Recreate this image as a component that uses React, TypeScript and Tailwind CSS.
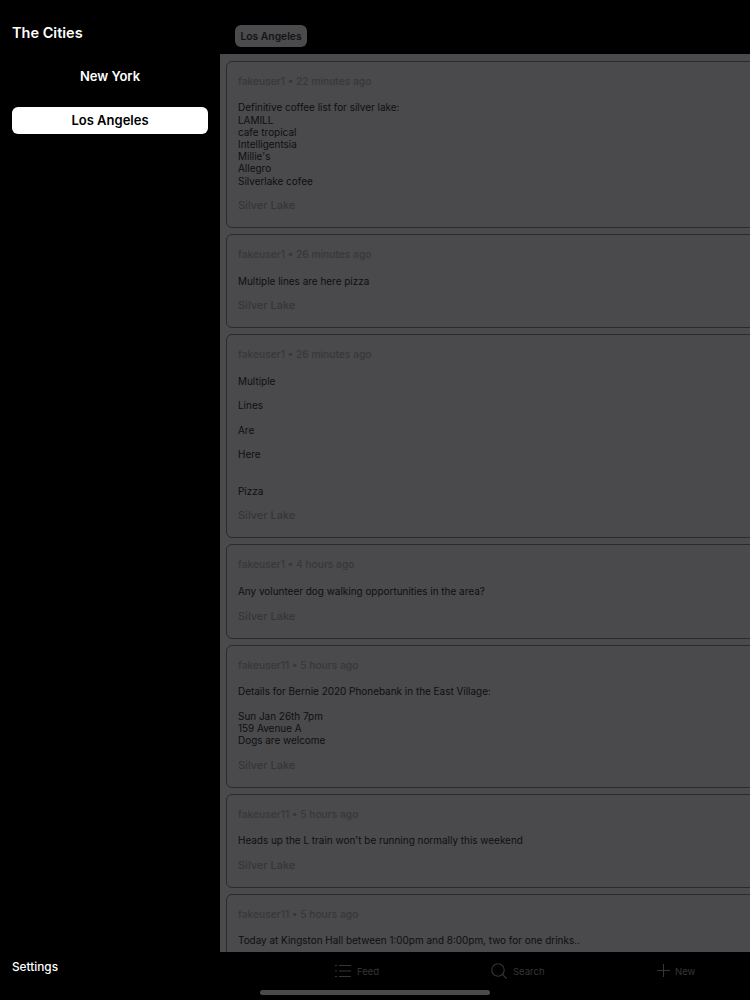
const posts = [
  { meta: "fakeuser1 • 22 minutes ago", body: "Definitive coffee list for silver lake:\nLAMILL\ncafe tropical\nIntelligentsia\nMillie's\nAllegro\nSilverlake cofee", place: "Silver Lake" },
  { meta: "fakeuser1 • 26 minutes ago", body: "Multiple lines are here pizza", place: "Silver Lake" },
  { meta: "fakeuser1 • 26 minutes ago", body: "Multiple\n\nLines\n\nAre\n\nHere\n\n\nPizza", place: "Silver Lake" },
  { meta: "fakeuser1 • 4 hours ago", body: "Any volunteer dog walking opportunities in the area?", place: "Silver Lake" },
  { meta: "fakeuser11 • 5 hours ago", body: "Details for Bernie 2020 Phonebank in the East Village:\n\nSun Jan 26th 7pm\n159 Avenue A\nDogs are welcome", place: "Silver Lake" },
  { meta: "fakeuser11 • 5 hours ago", body: "Heads up the L train won't be running normally this weekend", place: "Silver Lake" },
  { meta: "fakeuser11 • 5 hours ago", body: "Today at Kingston Hall between 1:00pm and 8:00pm, two for one drinks..", place: "" },
];

function Card({ meta, body, place }: { meta: string; body: string; place: string }) {
  return (
    <div className="mr-[-12px] shrink-0 rounded-[6px] border border-[#2a2a2c] px-[11px] pt-[12px] pb-[15px]">
      <div className="h-[14px] text-[10.25px] leading-[14px] font-medium text-[#38373a]">{meta}</div>
      <div className="mt-[13.6px] whitespace-pre-line text-[9.95px] leading-[12.2px] text-[#0f0f10]">{body}</div>
      {place && <div className="mt-[11.4px] h-[14px] text-[11px] leading-[14px] font-medium text-[#363538]">{place}</div>}
    </div>
  );
}

export default function App() {
  return (
    <div className="relative flex h-[1000px] w-[750px] overflow-hidden bg-black font-['Inter',sans-serif]">
      <aside className="flex w-[220px] shrink-0 flex-col px-[12px]">
        <h1 className="mt-[23px] h-[19px] text-[14.5px] leading-[19px] font-semibold text-white">The Cities</h1>
        <div className="mt-[21px] flex h-[27px] items-center justify-center text-[13px] font-semibold text-white">New York</div>
        <div className="mt-[17px] flex h-[27px] items-center justify-center rounded-[6px] bg-white text-[13px] font-semibold text-black">Los Angeles</div>
        <div className="mt-auto mb-[25px] text-[11.8px] leading-[16px] font-medium text-white">Settings</div>
      </aside>
      <main className="flex min-w-0 flex-1 flex-col">
        <header className="h-[54px] shrink-0 pt-[25px] pl-[15px]">
          <div className="flex h-[22px] w-fit items-center rounded-[6px] bg-[#4b4a4c] px-[5.5px] pt-[1px] text-[10.3px] font-semibold text-[#141415]">Los Angeles</div>
        </header>
        <section className="flex h-[898px] shrink-0 flex-col gap-[6px] overflow-hidden bg-[#4a494b] pt-[6.8px] pl-[6px]">
          {posts.map((p, i) => (
            <Card key={i} meta={p.meta} body={p.body} place={p.place} />
          ))}
        </section>
        <nav className="flex h-[48px] shrink-0 items-start pl-[115px] pt-[10px] text-[#363538]">
          <div className="flex w-[156px] items-center gap-[6px]">
            <svg width="16" height="14" viewBox="0 0 16 14" fill="none" stroke="currentColor" strokeWidth="1.1">
              <path d="M0 1.5h2M0 7h2M0 12.5h2M4 1.5h12M4 7h12M4 12.5h12" />
            </svg>
            <span className="mt-[3px] text-[9.5px]">Feed</span>
          </div>
          <div className="flex w-[166px] items-center gap-[6px]">
            <svg width="16" height="16" viewBox="0 0 16 16" fill="none" stroke="currentColor" strokeWidth="1.1">
              <circle cx="7" cy="7" r="6.2" />
              <path d="M11.5 11.5L15.5 15.5" />
            </svg>
            <span className="mt-[3px] text-[9.5px]">Search</span>
          </div>
          <div className="flex items-center gap-[5px]">
            <svg width="13" height="13" viewBox="0 0 13 13" fill="none" stroke="currentColor" strokeWidth="1.1">
              <path d="M6.5 0v13M0 6.5h13" />
            </svg>
            <span className="mt-[3px] text-[9.5px]">New</span>
          </div>
        </nav>
      </main>
      <div className="absolute bottom-[5px] left-[260px] h-[5px] w-[230px] rounded-full bg-[#4a494b]" />
    </div>
  );
}
